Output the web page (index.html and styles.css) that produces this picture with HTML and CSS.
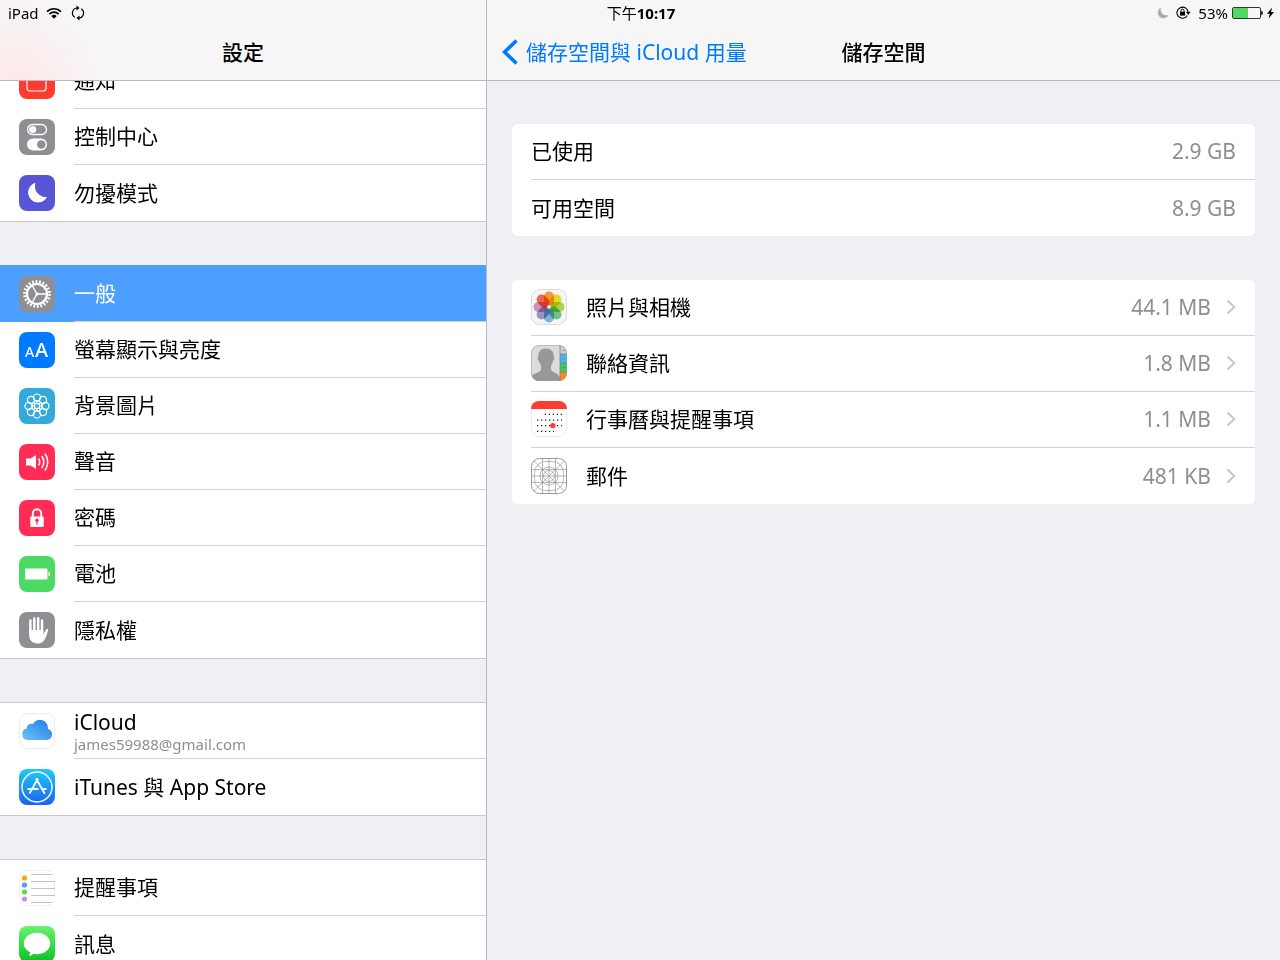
FILE: index.html
```html
<!DOCTYPE html>
<html lang="zh-Hant">
<head>
  <meta charset="UTF-8">
  <meta name="viewport" content="width=device-width, initial-scale=1.0">
  <title>設定</title>
  <link rel="stylesheet" href="styles.css">
</head>
<body>

  <div class="device">
    <div class="status-bar">
      <div class="status-left">
        <span>iPad</span>
        <svg width="16" height="12" viewBox="0 0 16 12">
          <path d="M1 4.6a10 10 0 0 1 14 0M3.4 7.1a6.5 6.5 0 0 1 9.2 0" fill="none" stroke="#000" stroke-width="1.7"/>
          <path d="M8 11.8 5.3 9a3.8 3.8 0 0 1 5.4 0z"/>
        </svg>
        <svg class="sync" width="14" height="16" viewBox="0 0 14 16">
          <path d="M3.8 12.2A5 5 0 0 1 5.8 3M10.2 3.8A5 5 0 0 1 8.2 13" fill="none" stroke="#000" stroke-width="1.2"/>
          <path d="M5.5.5 8.500 3 5.5 5.6zM8.5 15.5 5.500 13l3-2.6z"/>
        </svg>
      </div>
      <div class="status-time">下午<b>10:17</b></div>
      <div class="status-right">
        <svg width="12" height="12" viewBox="0 0 12 12">
          <path d="M4 .6a5.6 5.6 0 1 0 7.6 7.3A5.8 5.8 0 0 1 4 .6z" fill="#a9a9ac"/>
        </svg>
        <svg width="15" height="13" viewBox="0 0 15 13">
          <path d="M11.4 9.5A5.6 5.6 0 1 1 12.1 6" fill="none" stroke="#000" stroke-width="1.1"/>
          <path d="M9.8 5.8h4.8l-2.4 3z"/>
          <rect x="4" y="5.8" width="5" height="3.8"/>
          <path d="M5 6V4.6a1.5 1.5 0 0 1 3 0V6" fill="none" stroke="#000"/>
        </svg>
        <span>53%</span>
        <svg class="charge" width="31" height="12" viewBox="0 0 31 12">
          <rect x=".5" y=".5" width="28" height="11" rx="1.5" fill="none" stroke="#333"/>
          <rect x="1" y="1" width="15" height="10" fill="#4cd964"/>
          <path d="M29.2 3.8q1.6 0 1.6 2.2t-1.6 2.2z"/>
        </svg>
        <svg width="7" height="12" viewBox="0 0 7 12">
          <path d="M5 .5 0 6.8h2.8L1.6 11.5 7 4.9H4z"/>
        </svg>
      </div>
    </div>

    <nav class="sidebar">
      <header class="nav-bar sidebar-bar">
        <h1>設定</h1>
      </header>
      <div class="menu">
        <div class="menu-group">
          <a class="menu-item" href="#">
            <svg class="icon" viewBox="0 0 36 36">
              <rect width="36" height="36" rx="8" fill="#ff3b30"/>
              <rect x="8" y="8" width="19" height="20" rx="3" fill="none" stroke="#fff" stroke-width="1.2"/>
            </svg>
            <span class="label">通知</span>
          </a>
          <a class="menu-item" href="#">
            <svg class="icon" viewBox="0 0 36 36">
              <rect width="36" height="36" rx="8" fill="#8e8e93"/>
              <rect x="8.5" y="5.5" width="19" height="10" rx="5" fill="none" stroke="#fff" stroke-width="1.3"/>
              <circle cx="13.7" cy="10.5" r="3.6" fill="#fff"/>
              <rect x="8" y="19.5" width="20" height="12" rx="6" fill="#fff"/>
              <circle cx="22.3" cy="25.5" r="4.3" fill="#8e8e93"/>
            </svg>
            <span class="label">控制中心</span>
          </a>
          <a class="menu-item" href="#">
            <svg class="icon" viewBox="0 0 36 36">
              <rect width="36" height="36" rx="8" fill="#5856d6"/>
              <path d="M16.400 7.800a10 10 0 1 0 11.600 14.200A11 11 0 0 1 16.400 7.800z" fill="#fff"/>
            </svg>
            <span class="label">勿擾模式</span>
          </a>
        </div>

        <div class="menu-group">
          <a class="menu-item selected" href="#">
            <svg class="icon" viewBox="0 0 36 36">
              <rect width="36" height="36" rx="8" fill="#8e8e93"/>
              <g fill="none" stroke="#fff">
                <circle cx="18" cy="18" r="12.4" stroke-width="3" stroke-dasharray="1.8 1.741"/>
                <circle cx="18" cy="18" r="10" stroke-width="2.2"/>
                <path d="M18 18h9.5M18 18l-4.8-8.3M18 18l-4.8 8.3" stroke-width="1.3"/>
              </g>
              <circle cx="18" cy="18" r="1.7" fill="#fff"/>
            </svg>
            <span class="label">一般</span>
          </a>
          <a class="menu-item" href="#">
            <svg class="icon" viewBox="0 0 36 36">
              <rect width="36" height="36" rx="8" fill="#007aff"/>
              <text class="icon-text" x="6" y="25" font-size="14">A</text>
              <text class="icon-text" x="16" y="25" font-size="20">A</text>
            </svg>
            <span class="label">螢幕顯示與亮度</span>
          </a>
          <a class="menu-item" href="#">
            <svg class="icon" viewBox="0 0 36 36">
              <rect width="36" height="36" rx="8" fill="#34aadc"/>
              <g fill="none" stroke="#fff" stroke-width="1.2">
                <circle cx="18" cy="9.6" r="3.6"/>
                <circle cx="24" cy="12" r="3.6"/>
                <circle cx="26.4" cy="18" r="3.6"/>
                <circle cx="24" cy="24" r="3.6"/>
                <circle cx="18" cy="26.4" r="3.6"/>
                <circle cx="12" cy="24" r="3.6"/>
                <circle cx="9.6" cy="18" r="3.6"/>
                <circle cx="12" cy="12" r="3.6"/>
                <circle cx="18" cy="18" r="2.6"/>
                <path d="M18 13v2.4M18 20.6V23M13 18h2.4M20.6 18H23M14.5 14.5l1.7 1.7M19.8 19.8l1.7 1.7M21.5 14.5l-1.7 1.7M16.2 19.8l-1.7 1.7"/>
                <circle cx="18" cy="18" r="5.2"/>
              </g>
            </svg>
            <span class="label">背景圖片</span>
          </a>
          <a class="menu-item" href="#">
            <svg class="icon" viewBox="0 0 36 36">
              <rect width="36" height="36" rx="8" fill="#ff2d55"/>
              <path d="M7 14.5h4.5L17 11v14l-5.5-3.5H7z" fill="#fff"/>
              <path d="M19.6 14.5q2.2 3.5 0 7M22.8 12q4 6 0 12M26 9.5q5.5 8.5 0 17" fill="none" stroke="#fff" stroke-width="1.5"/>
            </svg>
            <span class="label">聲音</span>
          </a>
          <a class="menu-item" href="#">
            <svg class="icon" viewBox="0 0 36 36">
              <rect width="36" height="36" rx="8" fill="#ff2d55"/>
              <rect x="11.3" y="16.5" width="13.4" height="10.5" rx=".8" fill="#fff"/>
              <path d="M13.8 17v-3.500a4.200 4.200 0 0 1 8.400 0V17" fill="none" stroke="#fff" stroke-width="1.9"/>
              <circle cx="18" cy="20.3" r="1.7" fill="#ff2d55"/>
              <path d="M17.4 20.5h1.2v4h-1.2z" fill="#ff2d55"/>
            </svg>
            <span class="label">密碼</span>
          </a>
          <a class="menu-item" href="#">
            <svg class="icon" viewBox="0 0 36 36">
              <rect width="36" height="36" rx="8" fill="#4cd964"/>
              <rect x="6" y="12.5" width="22.5" height="11" rx="1" fill="#fff"/>
              <path d="M29.5 15.5q1.7.5 1.7 2.5t-1.7 2.5z" fill="#fff"/>
            </svg>
            <span class="label">電池</span>
          </a>
          <a class="menu-item" href="#">
            <svg class="icon" viewBox="0 0 36 36">
              <rect width="36" height="36" rx="8" fill="#8e8e93"/>
              <path d="M11.4 8.5v13M15.3 6.5v14M19.2 6.2v14M23 8.5v13" stroke="#fff" stroke-width="2.5" stroke-linecap="round"/>
              <path d="M10.150 18h14.100v4.500l2.500-4.300q1-1.500 2.600-1-.5 2.300-1.600 5.500C26 28.500 23.500 31.500 18.700 31.500c-6 0-8.550-3.500-8.550-9z" fill="#fff"/>
            </svg>
            <span class="label">隱私權</span>
          </a>
        </div>

        <div class="menu-group">
          <a class="menu-item" href="#">
            <svg class="icon" viewBox="0 0 36 36">
              <defs>
                <linearGradient id="cloud" x1="0" y1="1" x2="1" y2="0">
                  <stop offset="0" stop-color="#6cc5f8"/>
                  <stop offset="1" stop-color="#2079e5"/>
                </linearGradient>
              </defs>
              <rect x=".5" y=".5" width="35" height="35" rx="8" fill="#fff" stroke="#ececec"/>
              <path d="M8.500 27a5.800 5.800 0 0 1-.8-11.400 4.800 4.800 0 0 1 6.300-4.700 8 8 0 0 1 14.900 5.100A5.600 5.600 0 0 1 27.600 27z" fill="url(#cloud)"/>
            </svg>
            <span class="label">
              <span>iCloud</span>
              <small>james59988@gmail.com</small>
            </span>
          </a>
          <a class="menu-item" href="#">
            <svg class="icon" viewBox="0 0 36 36">
              <defs>
                <linearGradient id="store" x1="0" y1="0" x2="0" y2="1">
                  <stop offset="0" stop-color="#1ccdf8"/>
                  <stop offset="1" stop-color="#1d62f0"/>
                </linearGradient>
              </defs>
              <rect width="36" height="36" rx="8" fill="url(#store)"/>
              <g fill="none" stroke="#fff">
                <circle cx="18" cy="18" r="15" stroke-width="1.4"/>
                <path d="M10.5 24.5 19 9.5M17 9.5l8.800 15.300M8.500 20h11M22.500 20h5" stroke-width="1.8"/>
              </g>
            </svg>
            <span class="label">iTunes 與 App Store</span>
          </a>
        </div>

        <div class="menu-group">
          <a class="menu-item" href="#">
            <svg class="icon" viewBox="0 0 36 36">
              <rect x=".5" y=".5" width="35" height="35" rx="8" fill="#fff" stroke="#efefef"/>
              <path d="M12 4.5h21M12 11.5h24M12 18.5h24M12 25.5h24M12 32.5h21" stroke="#c4c4c6"/>
              <circle cx="5.5" cy="8" r="2.6" fill="#ff9f1a"/>
              <circle cx="5.5" cy="15" r="2.6" fill="#3ba7f0"/>
              <circle cx="5.5" cy="22" r="2.6" fill="#63da38"/>
              <circle cx="5.5" cy="29" r="2.6" fill="#cc8fe0"/>
            </svg>
            <span class="label">提醒事項</span>
          </a>
          <a class="menu-item" href="#">
            <svg class="icon" viewBox="0 0 36 36">
              <defs>
                <linearGradient id="bubble" x1="0" y1="0" x2="0" y2="1">
                  <stop offset="0" stop-color="#67f46f"/>
                  <stop offset="1" stop-color="#0bc31f"/>
                </linearGradient>
              </defs>
              <rect width="36" height="36" rx="8" fill="url(#bubble)"/>
              <path d="M18 6.800c7.500 0 13.200 4.700 13.200 10.700S25.500 28.200 18 28.200q-1.800 0-3.300-.4-2 2-5 2.200 1.600-1.600 1.500-3.800C7.200 24.300 4.800 21.200 4.800 17.500 4.800 11.500 10.500 6.800 18 6.800z" fill="#fff"/>
            </svg>
            <span class="label">訊息</span>
          </a>
        </div>
      </div>
    </nav>

    <main class="detail">
      <header class="nav-bar detail-bar">
        <a class="back" href="#">
          <svg width="16" height="26" viewBox="0 0 16 26">
            <path d="M14.5 1.5 2.5 13l12 11.5" fill="none" stroke="#007aff" stroke-width="3.6"/>
          </svg>
          <span>儲存空間與 iCloud 用量</span>
        </a>
        <h2>儲存空間</h2>
      </header>

      <div class="cards">
        <div class="card">
          <div class="row">
            <span class="name">已使用</span>
            <span class="size">2.9 GB</span>
          </div>
          <div class="row">
            <span class="name">可用空間</span>
            <span class="size">8.9 GB</span>
          </div>
        </div>

        <div class="card">
          <a class="row" href="#">
            <svg class="icon" viewBox="0 0 36 36">
              <rect x=".5" y=".5" width="35" height="35" rx="8" fill="#f5f5f5" stroke="#dcdcdc"/>
              <g class="petals">
                <rect x="13" y="2.5" width="10" height="14" rx="5" fill="#ffa02e"/>
                <rect x="13" y="2.5" width="10" height="14" rx="5" fill="#f0e02a" transform="rotate(45 18 18)"/>
                <rect x="13" y="2.5" width="10" height="14" rx="5" fill="#b8d85a" transform="rotate(90 18 18)"/>
                <rect x="13" y="2.5" width="10" height="14" rx="5" fill="#74c892" transform="rotate(135 18 18)"/>
                <rect x="13" y="2.5" width="10" height="14" rx="5" fill="#7fbbe2" transform="rotate(180 18 18)"/>
                <rect x="13" y="2.5" width="10" height="14" rx="5" fill="#a297cc" transform="rotate(225 18 18)"/>
                <rect x="13" y="2.5" width="10" height="14" rx="5" fill="#d898be" transform="rotate(270 18 18)"/>
                <rect x="13" y="2.5" width="10" height="14" rx="5" fill="#f56a54" transform="rotate(315 18 18)"/>
              </g>
            </svg>
            <span class="name">照片與相機</span>
            <span class="size">44.1 MB</span>
            <svg class="chevron" viewBox="0 0 10 16"><path d="m1.5 1.5 6.8 6.5-6.8 6.5"/></svg>
          </a>
          <a class="row" href="#">
            <svg class="icon" viewBox="0 0 36 36">
              <defs>
                <clipPath id="round"><rect width="36" height="36" rx="8"/></clipPath>
              </defs>
              <g clip-path="url(#round)">
                <rect width="36" height="36" fill="#dcdcdc"/>
                <path d="M15 3.500c5 0 8 3 7.800 8.500.8.500.6 3.500-.8 4-.3 2-1.200 3.200-2 4.500v4c0 3 9 3.500 9 9V36H0v-3c0-5 10-5 10-8.500v-4c-.8-1.300-1.700-2.500-2-4.500-1.400-.5-1.600-3.500-.8-4C7 6.500 10 3.500 15 3.500z" fill="#989898"/>
                <rect x="29" width="7" height="9" fill="#cfcfcf"/>
                <rect x="29" y="9" width="7" height="9" fill="#4cb4ee"/>
                <rect x="29" y="18" width="7" height="9" fill="#3ecb5c"/>
                <rect x="29" y="27" width="7" height="9" fill="#f68b1f"/>
                <path d="M29 0v36M29 9h7M29 18h7M29 27h7" stroke="#777" stroke-width=".7"/>
                <path d="M31.5 5.5h2M31.5 14h2M31.5 22.5h2" stroke="#555" stroke-opacity=".5"/>
              </g>
              <rect x=".5" y=".5" width="35" height="35" rx="8" fill="none" stroke="#999" stroke-opacity=".5"/>
            </svg>
            <span class="name">聯絡資訊</span>
            <span class="size">1.8 MB</span>
            <svg class="chevron" viewBox="0 0 10 16"><path d="m1.5 1.5 6.8 6.5-6.8 6.5"/></svg>
          </a>
          <a class="row" href="#">
            <svg class="icon" viewBox="0 0 36 36">
              <rect x=".5" y=".5" width="35" height="35" rx="8" fill="#fff" stroke="#ececec"/>
              <path d="M0 8a8 8 0 0 1 8-8h20a8 8 0 0 1 8 8z" fill="#ff3b30"/>
              <g stroke="#222" stroke-width="1.3" stroke-dasharray="1.3 2.7">
                <path d="M13.7 13.300H31M6 19.100h25M6 24.600h25M6 30.300h17"/>
              </g>
              <circle cx="21.8" cy="24.6" r="2.7" fill="#ff3b30"/>
            </svg>
            <span class="name">行事曆與提醒事項</span>
            <span class="size">1.1 MB</span>
            <svg class="chevron" viewBox="0 0 10 16"><path d="m1.5 1.5 6.8 6.5-6.8 6.5"/></svg>
          </a>
          <a class="row" href="#">
            <svg class="icon" viewBox="0 0 36 36">
              <g fill="none" stroke="#999" stroke-width=".7">
                <rect x=".5" y=".5" width="35" height="35" rx="8" fill="#fff" stroke-width="1"/>
                <rect x="3.500" y="3.500" width="29" height="29" rx="11"/>
                <path d="M11.500 0v36M18 0v36M24.500 0v36M0 11.500h36M0 18h36M0 24.500h36M3 3l30 30M33 3 3 33"/>
                <circle cx="18" cy="18" r="5.5"/>
                <circle cx="18" cy="18" r="9"/>
              </g>
            </svg>
            <span class="name">郵件</span>
            <span class="size">481 KB</span>
            <svg class="chevron" viewBox="0 0 10 16"><path d="m1.5 1.5 6.8 6.5-6.8 6.5"/></svg>
          </a>
        </div>
      </div>
    </main>
  </div>

</body>
</html>
```

FILE: styles.css
```css
* {
  margin: 0;
  padding: 0;
  box-sizing: border-box;
}

body, html {
  height: 100%;
  font-family: 'Noto Sans', 'Noto Sans CJK TC', sans-serif;
  font-size: 21px;
  line-height: 28px;
  overflow: hidden;
  background-color: #efeff4;
  color: #000;
}

a {
  color: inherit;
  text-decoration: none;
}

svg {
  display: block;
  flex-shrink: 0;
}

/* The status bar shares the first grid row with both panes */
.device {
  display: grid;
  grid-template-columns: minmax(320px, 487px) 1fr;
  grid-template-rows: 25px minmax(0, 1fr);
  height: 100%;
}

.status-bar {
  grid-column: 1 / 3;
  grid-row: 1;
  z-index: 2;
  display: grid;
  grid-template-columns: 1fr auto 1fr;
  align-items: center;
  padding: 0 6px 0 8px;
  font-size: 15px;
  line-height: 20px;
}

.status-left, .status-right {
  display: flex;
  align-items: center;
  gap: 7px;
}

.status-left .sync {
  margin-left: 2px;
}

.status-right {
  justify-content: flex-end;
}

.status-right .charge {
  margin: 0 -3px;
}

.sidebar {
  grid-column: 1;
  grid-row: 1 / 3;
  overflow: hidden;
  border-right: 1px solid #b9b9bd;
}

.detail {
  grid-column: 2;
  grid-row: 1 / 3;
}

.nav-bar {
  height: 81px;
  padding: 25px 0 2px;
  border-bottom: 1px solid #b9b9bd;
  background-color: #f6f6f7;
}

h1, h2 {
  font-size: 21px;
  font-weight: 500;
}

.sidebar-bar {
  position: relative;
  z-index: 1;
  display: flex;
  align-items: center;
  justify-content: center;
  background-image: radial-gradient(circle at 15px 80px, #fde9e8, #f6f6f7 90px);
}

.detail-bar {
  display: grid;
  grid-template-columns: 1fr auto 1fr;
  align-items: center;
}

.back {
  display: flex;
  align-items: center;
  gap: 8px;
  padding-left: 15px;
  color: #007aff;
  white-space: nowrap;
}

/* Scrolled so the first item is partly behind the bar */
.menu {
  display: flex;
  flex-direction: column;
  gap: 43px;
  margin-top: -29px;
}

.menu-group {
  border-top: 1px solid #c8c7cc;
  border-bottom: 1px solid #c8c7cc;
  background-color: #fff;
}

.menu-item {
  display: flex;
  align-items: center;
  gap: 19px;
  height: 56px;
  padding-left: 19px;
}

.icon {
  width: 36px;
  height: 36px;
}

.menu-item .icon {
  margin-bottom: 1px;
}

.icon-text {
  fill: #fff;
  font-weight: 500;
}

.label {
  flex: 1;
  display: flex;
  flex-direction: column;
  justify-content: center;
  height: 100%;
  padding-bottom: 1px;
  border-bottom: 1px solid #d3d2d6;
}

.menu-item:last-child .label {
  border-bottom: none;
}

.label small {
  font-size: 15px;
  line-height: 16px;
  color: #8e8e93;
}

.selected {
  background-color: #4c9fff;
  box-shadow: 0 -1px #4c9fff;
  color: #fff;
}

.cards {
  display: flex;
  flex-direction: column;
  gap: 44px;
  padding: 43px 25px;
}

.card {
  padding-left: 19px;
  border-radius: 6px;
  background-color: #fff;
}

.row {
  display: flex;
  align-items: center;
  height: 56px;
  padding: 0 19px 1px 0;
  border-bottom: 1px solid #d3d2d6;
}

.row:last-child {
  border-bottom: none;
}

.row .icon {
  margin-right: 19px;
}

.petals rect {
  mix-blend-mode: multiply;
}

.name {
  flex: 1;
}

.size {
  color: #8e8e93;
}

.chevron {
  width: 10px;
  height: 16px;
  margin-left: 15px;
  fill: none;
  stroke: #c7c7cc;
  stroke-width: 2;
}
```
